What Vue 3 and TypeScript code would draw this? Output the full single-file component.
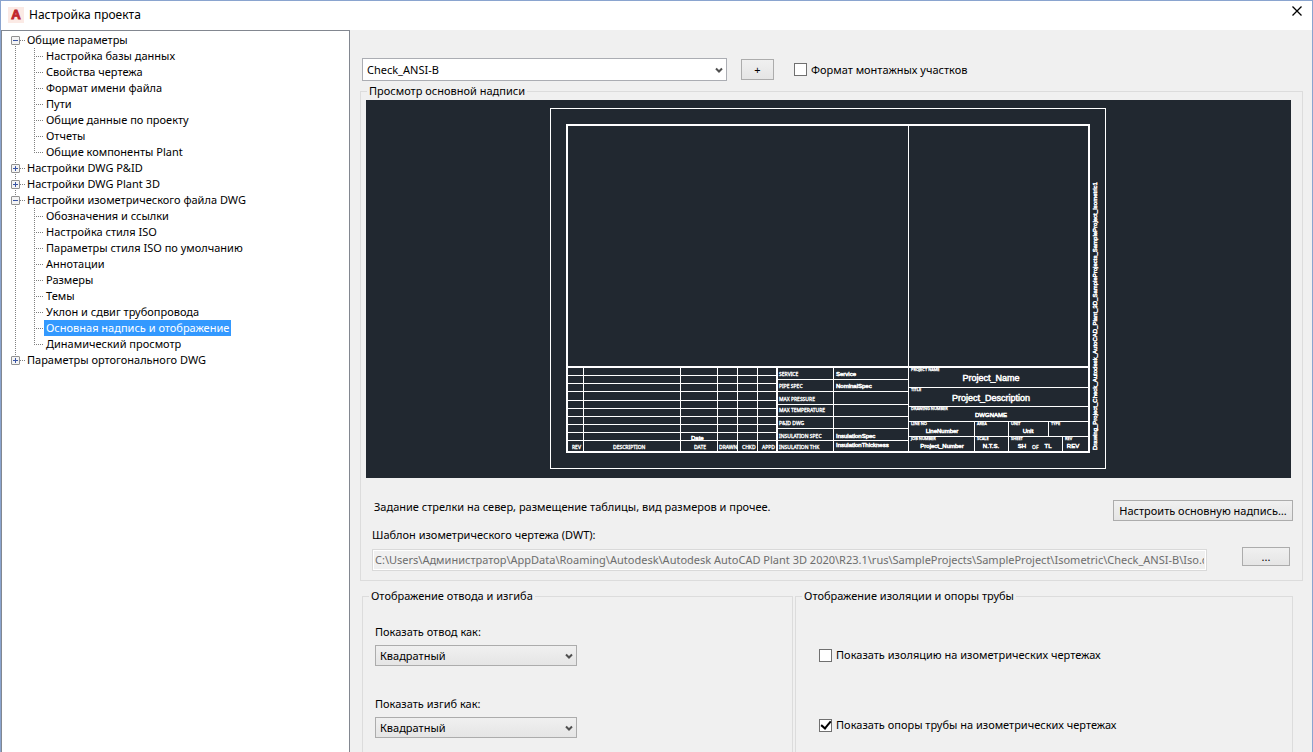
<script setup lang="ts">
import { ref } from 'vue'

interface Branch {
  label: string
  open: boolean
  children: string[]
}

interface Caption {
  text: string
  x: number
  y: number
}

const branches = ref<Branch[]>([
  {
    label: 'Общие параметры',
    open: true,
    children: [
      'Настройка базы данных',
      'Свойства чертежа',
      'Формат имени файла',
      'Пути',
      'Общие данные по проекту',
      'Отчеты',
      'Общие компоненты Plant',
    ],
  },
  { label: 'Настройки DWG P&ID', open: false, children: [] },
  { label: 'Настройки DWG Plant 3D', open: false, children: [] },
  {
    label: 'Настройки изометрического файла DWG',
    open: true,
    children: [
      'Обозначения и ссылки',
      'Настройка стиля ISO',
      'Параметры стиля ISO по умолчанию',
      'Аннотации',
      'Размеры',
      'Темы',
      'Уклон и сдвиг трубопровода',
      'Основная надпись и отображение',
      'Динамический просмотр',
    ],
  },
  { label: 'Параметры ортогонального DWG', open: false, children: [] },
])

const selected = ref('Основная надпись и отображение')
const style = ref('Check_ANSI-B')
const spools = ref(false)
const elbow = ref('Квадратный')
const bend = ref('Квадратный')
const insulation = ref(false)
const supports = ref(true)
const template = ref(
  'C:\\Users\\Администратор\\AppData\\Roaming\\Autodesk\\Autodesk AutoCAD Plant 3D 2020\\R23.1\\rus\\SampleProjects\\SampleProject\\Isometric\\Check_ANSI-B\\Iso.dwt',
)

const revisionRows = [375, 383, 391, 400, 408, 416, 424, 432, 440]
const revisionColumns = [583, 680, 717, 737, 757, 833]
const specRows = [379, 391, 404, 416, 428, 440]
const titleRows = [387, 406, 421, 436]

const labels: Caption[] = [
  { text: 'SERVICE', x: 779, y: 376 },
  { text: 'PIPE SPEC', x: 779, y: 388 },
  { text: 'MAX PRESSURE', x: 779, y: 401 },
  { text: 'MAX TEMPERATURE', x: 779, y: 412 },
  { text: 'P&ID DWG', x: 779, y: 425 },
  { text: 'INSULATION SPEC', x: 779, y: 438 },
  { text: 'INSULATION THK', x: 779, y: 449 },
  { text: 'REV', x: 572, y: 449 },
  { text: 'DESCRIPTION', x: 613, y: 449 },
  { text: 'DATE', x: 694, y: 449 },
  { text: 'DRAWN', x: 719, y: 449 },
  { text: 'CHKD', x: 742, y: 449 },
  { text: 'APPD', x: 762, y: 449 },
]

const values: Caption[] = [
  { text: 'Service', x: 836, y: 376 },
  { text: 'NominalSpec', x: 836, y: 388 },
  { text: 'InsulationSpec', x: 836, y: 438 },
  { text: 'InsulationThickness', x: 836, y: 447 },
  { text: 'Date', x: 691, y: 440 },
]

const tinyLabels: Caption[] = [
  { text: 'PROJECT NAME', x: 911, y: 371 },
  { text: 'TITLE', x: 911, y: 391 },
  { text: 'DRAWING NUMBER', x: 911, y: 410 },
  { text: 'LINE NO', x: 911, y: 425 },
  { text: 'AREA', x: 977, y: 425 },
  { text: 'UNIT', x: 1011, y: 425 },
  { text: 'TYPE', x: 1051, y: 425 },
  { text: 'JOB NUMBER', x: 911, y: 440 },
  { text: 'SCALE', x: 977, y: 440 },
  { text: 'SHEET', x: 1011, y: 440 },
  { text: 'REV', x: 1065, y: 440 },
]

const centred: Caption[] = [
  { text: 'DWGNAME', x: 991, y: 417 },
  { text: 'LineNumber', x: 942, y: 433 },
  { text: 'Unit', x: 1028, y: 433 },
  { text: 'Project_Number', x: 942, y: 448 },
  { text: 'N.T.S.', x: 991, y: 448 },
  { text: 'SH', x: 1022, y: 448 },
  { text: 'TL', x: 1048, y: 448 },
  { text: 'REV', x: 1073, y: 448 },
]

const plotStamp =
  'Drawing_Project_Check_Autodesk_AutoCAD_Plant_3D_SampleProjects_SampleProject_Isometric1'
</script>

<template>
  <div class="window">
    <header class="titlebar">
      <svg class="logo" viewBox="0 0 16 16" aria-hidden="true">
        <rect width="16" height="16" class="logo-back" />
        <text x="8" y="12" text-anchor="middle" class="logo-letter">A</text>
      </svg>
      <h1>Настройка проекта</h1>
      <button class="close" type="button" aria-label="Закрыть">
        <svg viewBox="0 0 10 10" aria-hidden="true"><path d="M0.5 0.5 9.5 9.5M9.5 0.5 0.5 9.5" /></svg>
      </button>
    </header>

    <div class="body">
      <nav class="tree">
        <ul class="roots">
          <li v-for="branch in branches" :key="branch.label">
            <div class="row">
              <button
                class="toggle"
                type="button"
                :aria-expanded="branch.open"
                :aria-label="branch.label"
                @click="branch.open = !branch.open"
              >
                <svg viewBox="0 0 9 9" aria-hidden="true">
                  <rect x="0.5" y="0.5" width="8" height="8" rx="0.5" class="toggle-box" />
                  <path v-if="branch.open" d="M2 4.5h5" class="toggle-sign" />
                  <path v-else d="M2 4.5h5M4.5 2v5" class="toggle-sign" />
                </svg>
              </button>
              <span class="dots short"></span>
              <button
                class="node"
                :class="{ selected: selected === branch.label }"
                type="button"
                @click="selected = branch.label"
              >{{ branch.label }}</button>
            </div>
            <ul v-if="branch.open && branch.children.length" class="children">
              <li v-for="child in branch.children" :key="child" class="row">
                <span class="dots"></span>
                <button
                  class="node"
                  :class="{ selected: selected === child }"
                  type="button"
                  @click="selected = child"
                >{{ child }}</button>
              </li>
            </ul>
          </li>
        </ul>
      </nav>

      <main class="page">
        <div class="toolbar">
          <span class="combo combo-style">
            <select v-model="style" aria-label="Стиль ISO">
              <option>Check_ANSI-B</option>
            </select>
            <svg viewBox="0 0 8 7" aria-hidden="true"><path d="M1 1.5 4 4.5 7 1.5" /></svg>
          </span>
          <button class="push add" type="button">+</button>
          <label class="check">
            <input v-model="spools" type="checkbox" />
            <span>Формат монтажных участков</span>
          </label>
        </div>

        <fieldset class="group preview">
          <legend>Просмотр основной надписи</legend>
          <svg class="sheet" viewBox="366 100 925 378" role="img" aria-label="Основная надпись">
            <g class="thin">
              <rect x="550.5" y="108.5" width="555" height="360" />
              <path d="M908.5 126V452" />
              <path v-for="x in revisionColumns" :key="'c' + x" :d="`M${x + 0.5} 367V452`" />
              <path v-for="y in revisionRows" :key="'r' + y" :d="`M567 ${y + 0.5}H777`" />
              <path v-for="y in specRows" :key="'s' + y" :d="`M777 ${y + 0.5}H908`" />
              <path v-for="y in titleRows" :key="'t' + y" :d="`M908 ${y + 0.5}H1089`" />
              <path d="M974.5 421V452M1008.5 421V452M1048.5 421V436M1062.5 436V452" />
            </g>
            <g class="thick">
              <rect x="567" y="125" width="522" height="327" />
              <path d="M567 367H1089M777 367V452" />
            </g>
            <g class="label">
              <text v-for="c in labels" :key="c.text + c.x" :x="c.x" :y="c.y">{{ c.text }}</text>
              <text x="1032" y="449">OF</text>
            </g>
            <g class="tiny">
              <text v-for="c in tinyLabels" :key="c.text + c.x" :x="c.x" :y="c.y">{{ c.text }}</text>
            </g>
            <g class="value">
              <text v-for="c in values" :key="c.text" :x="c.x" :y="c.y">{{ c.text }}</text>
            </g>
            <g class="value centre">
              <text v-for="c in centred" :key="c.text" :x="c.x" :y="c.y">{{ c.text }}</text>
            </g>
            <g class="heading centre">
              <text x="991" y="381">Project_Name</text>
              <text x="991" y="401">Project_Description</text>
            </g>
            <text class="stamp" transform="translate(1097 450) rotate(-90)">{{ plotStamp }}</text>
          </svg>

          <div class="setup">
            <p>Задание стрелки на север, размещение таблицы, вид размеров и прочее.</p>
            <button class="push configure" type="button">Настроить основную надпись…</button>
          </div>
          <label class="template-label" for="template">Шаблон изометрического чертежа (DWT):</label>
          <div class="template">
            <input id="template" v-model="template" type="text" disabled />
            <button class="push browse" type="button">...</button>
          </div>
        </fieldset>

        <div class="groups">
          <fieldset class="group fittings">
            <legend>Отображение отвода и изгиба</legend>
            <div class="field">
              <label for="elbow">Показать отвод как:</label>
              <span class="combo grey">
                <select id="elbow" v-model="elbow"><option>Квадратный</option></select>
                <svg viewBox="0 0 8 7" aria-hidden="true"><path d="M1 1.5 4 4.5 7 1.5" /></svg>
              </span>
            </div>
            <div class="field">
              <label for="bend">Показать изгиб как:</label>
              <span class="combo grey">
                <select id="bend" v-model="bend"><option>Квадратный</option></select>
                <svg viewBox="0 0 8 7" aria-hidden="true"><path d="M1 1.5 4 4.5 7 1.5" /></svg>
              </span>
            </div>
          </fieldset>

          <fieldset class="group insulation">
            <legend>Отображение изоляции и опоры трубы</legend>
            <label class="check">
              <input v-model="insulation" type="checkbox" />
              <span>Показать изоляцию на изометрических чертежах</span>
            </label>
            <label class="check">
              <input v-model="supports" type="checkbox" />
              <span>Показать опоры трубы на изометрических чертежах</span>
            </label>
          </fieldset>
        </div>
      </main>
    </div>
  </div>
</template>

<style>
body {
  background: #f0f0f0;
}
</style>

<style scoped>
* {
  box-sizing: border-box;
}

.window {
  display: flex;
  flex-direction: column;
  height: 100vh;
  overflow: hidden;
  border: solid #8aa4cf;
  border-width: 1px 1px 0;
  background: #f0f0f0;
  color: #000;
  font: 11px/16px 'Noto Sans', 'Open Sans', sans-serif;
}

button,
select,
input {
  font: inherit;
  color: inherit;
}

.titlebar {
  display: flex;
  flex: none;
  align-items: center;
  height: 29px;
  padding: 0 10px 1px 7px;
  background: #fff;
}

.logo {
  width: 16px;
  height: 16px;
}

.logo-back {
  fill: #fbeae5;
}

.logo-letter {
  fill: #c1272d;
  stroke: #c1272d;
  font: bold 13px 'Liberation Sans', sans-serif;
}

h1 {
  flex: 1;
  margin: 0 0 0 5px;
  font-size: 12px;
  font-weight: 400;
}

.close {
  align-self: flex-start;
  width: 10px;
  height: 10px;
  margin-top: 5px;
  padding: 0;
  border: 0;
  background: none;
}

.close svg {
  display: block;
  width: 10px;
  height: 10px;
  fill: none;
  stroke: #000;
  stroke-width: 1.3;
}

.body {
  display: flex;
  flex: 1;
  min-height: 0;
}

.tree {
  flex: none;
  width: 349px;
  padding: 1px 0 0 9px;
  border: solid #828790;
  border-width: 1px 1px 0;
  background: #fff;
}

ul {
  margin: 0;
  padding: 0;
  list-style: none;
}

.roots {
  background: repeating-linear-gradient(#808080 0 1px, transparent 1px 2px) 4px 8px / 1px calc(100% - 16px) no-repeat;
}

.children {
  padding-left: 23px;
  background: repeating-linear-gradient(#808080 0 1px, transparent 1px 2px) 23px 0 / 1px calc(100% - 8px) no-repeat;
}

.row {
  display: flex;
  align-items: center;
  height: 16px;
}

.toggle {
  width: 9px;
  height: 9px;
  padding: 0;
  border: 0;
  background: #fff;
}

.toggle svg {
  display: block;
  width: 9px;
  height: 9px;
}

.toggle-box {
  fill: #f4f4f4;
  stroke: #919191;
}

.toggle-sign {
  fill: none;
  stroke: #3a55a4;
}

.dots {
  width: 10px;
  height: 1px;
  background: repeating-linear-gradient(90deg, #808080 0 1px, transparent 1px 2px);
}

.dots.short {
  width: 5px;
}

.node {
  height: 16px;
  padding: 0 2px;
  border: 0;
  background: none;
  line-height: 16px;
  white-space: nowrap;
}

.node.selected {
  background: #3399ff;
  color: #fff;
}

.page {
  display: flex;
  flex: 1;
  flex-direction: column;
  min-width: 0;
  padding: 28px 9px 0 10px;
}

.toolbar {
  display: flex;
  align-items: center;
  padding-left: 2px;
}

.combo {
  position: relative;
  display: block;
  width: 202px;
  height: 21px;
}

.combo select {
  display: block;
  width: 100%;
  height: 100%;
  padding: 0 20px 0 4px;
  border: 1px solid #abadb3;
  border-radius: 0;
  appearance: none;
  background: #fff;
}

.combo.grey select {
  border-color: #acacac;
  background: linear-gradient(#f0f0f0, #e5e5e5);
}

.combo svg {
  position: absolute;
  top: calc(50% - 3px);
  right: 4px;
  width: 8px;
  height: 7px;
  fill: none;
  stroke: #505050;
  stroke-width: 2;
  pointer-events: none;
}

.combo-style {
  width: 365px;
  height: 23px;
}

.push {
  padding: 0;
  border: 1px solid #acacac;
  background: linear-gradient(#f0f0f0, #e5e5e5);
  white-space: nowrap;
}

.add {
  width: 33px;
  height: 21px;
  margin: 0 20px 0 14px;
}

.check {
  display: flex;
  align-items: center;
  gap: 4px;
}

.check input {
  display: grid;
  place-items: center;
  width: 13px;
  height: 13px;
  margin: 0;
  border: 1px solid #707070;
  appearance: none;
  background: #fff;
}

.check input:checked::before {
  width: 8px;
  height: 4px;
  margin-bottom: 3px;
  border: solid #000;
  border-width: 0 0 2px 2px;
  content: '';
  transform: rotate(-50deg);
}

.group {
  min-width: 0;
  margin: 0;
  border: 1px solid #dcdcdc;
}

legend {
  padding: 0 2px;
  line-height: 16px;
}

.preview {
  margin-top: 2px;
  padding: 1px 9px 9px 5px;
}

.preview legend {
  margin-left: 1px;
}

.sheet {
  display: block;
  width: calc(100% - 2px);
  height: 378px;
  background: #212830;
}

.thin,
.thick {
  fill: none;
  stroke: #fff;
  stroke-width: 1;
  shape-rendering: crispEdges;
}

.thick {
  stroke-width: 2;
}

.sheet text {
  fill: #fff;
  stroke: #fff;
  stroke-width: 0.3;
}

.sheet .value text,
.sheet .heading text,
.sheet .stamp {
  stroke-width: 0.5;
}

.label {
  font-size: 5px;
}

.tiny {
  font-size: 4px;
}

.value,
.stamp {
  font: 6px 'Liberation Sans', sans-serif;
}

.heading {
  font: 9px 'Liberation Sans', sans-serif;
}

.centre {
  text-anchor: middle;
}

.setup {
  display: flex;
  align-items: flex-start;
  justify-content: space-between;
  margin-top: 21px;
  padding-left: 8px;
}

p {
  margin: 0;
}

.configure {
  width: 180px;
  height: 21px;
  margin-top: 1px;
}

.template-label {
  display: block;
  width: fit-content;
  margin: 6px 0 4px 6px;
}

.template {
  display: flex;
  align-items: flex-start;
  padding: 0 3px 0 6px;
}

.template input {
  flex: 1;
  min-width: 0;
  height: 22px;
  margin: 2px 35px 0 0;
  padding: 0 2px 2px;
  border: 1px solid #d9d9d9;
  background: #f0f0f0;
  box-shadow: inset 0 0 0 1px #fff;
  color: #6d6d6d;
}

.browse {
  width: 48px;
  height: 19px;
}

.groups {
  display: flex;
  flex: 1;
  gap: 2px;
  margin: 7px 10px 0 2px;
}

.groups .group {
  padding: 0 6px;
  border-bottom: 0;
}

.fittings {
  flex: 430;
}

.insulation {
  flex: 499;
}

.field {
  margin-top: 30px;
  padding-left: 6px;
}

legend + .field {
  margin-top: 20px;
}

.field label {
  display: block;
  width: fit-content;
  margin-bottom: 5px;
}

.insulation .check {
  width: fit-content;
  margin: 54px 0 0 17px;
}

.insulation legend + .check {
  margin-top: 43px;
}
</style>
